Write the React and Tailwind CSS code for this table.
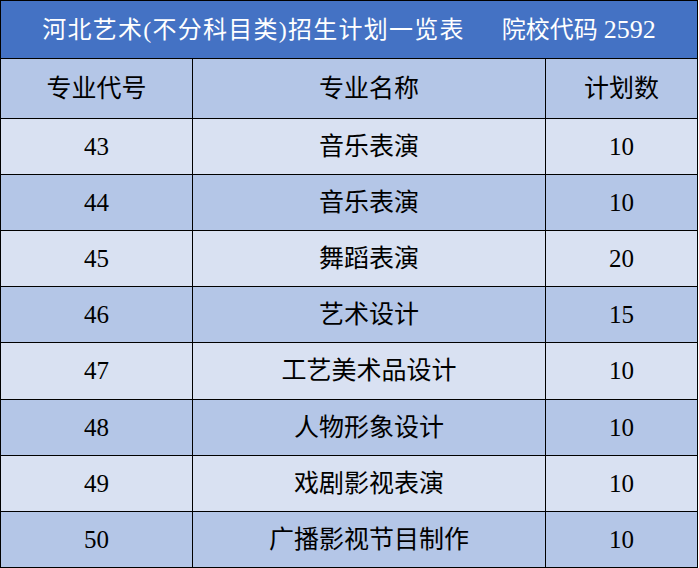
import * as React from 'react'

const rows = [
  { code: '43', name: '音乐表演', plan: '10' },
  { code: '44', name: '音乐表演', plan: '10' },
  { code: '45', name: '舞蹈表演', plan: '20' },
  { code: '46', name: '艺术设计', plan: '15' },
  { code: '47', name: '工艺美术品设计', plan: '10' },
  { code: '48', name: '人物形象设计', plan: '10' },
  { code: '49', name: '戏剧影视表演', plan: '10' },
  { code: '50', name: '广播影视节目制作', plan: '10' },
]

function Row({ cells, bg, height = 'h-[55px]' }) {
  return (
    <div className={`grid grid-cols-[192px_353px_151px] border-b border-black ${bg}`}>
      <div className={`${height} flex items-center justify-center border-r border-black`}>{cells[0]}</div>
      <div className={`${height} flex items-center justify-center border-r border-black`}>{cells[1]}</div>
      <div className={`${height} flex items-center justify-center`}>{cells[2]}</div>
    </div>
  )
}

export default function App() {
  return (
    <div className="w-[699px] h-[568px] overflow-hidden bg-white font-['Liberation_Serif','Noto_Sans_CJK_SC',serif] text-[25px] text-black">
      <div className="w-[698px] border-l border-t border-r border-black">
        <div className="h-[58px] flex items-center justify-center gap-[37px] bg-[#4472C4] text-white text-[24px] border-b border-black">
          <span className="tracking-[1.26px]">河北艺术(不分科目类)招生计划一览表</span>
          <span>
            院校代码 <span className="text-[26px]">2592</span>
          </span>
        </div>
        <Row cells={['专业代号', '专业名称', '计划数']} bg="bg-[#B4C6E7]" height="h-[59px]" />
        {rows.map((r, i) => (
          <Row
            key={r.code}
            cells={[r.code, r.name, r.plan]}
            bg={i % 2 === 0 ? 'bg-[#D9E1F2]' : 'bg-[#B4C6E7]'}
            height={i === 4 ? 'h-[56px]' : 'h-[55px]'}
          />
        ))}
      </div>
    </div>
  )
}
